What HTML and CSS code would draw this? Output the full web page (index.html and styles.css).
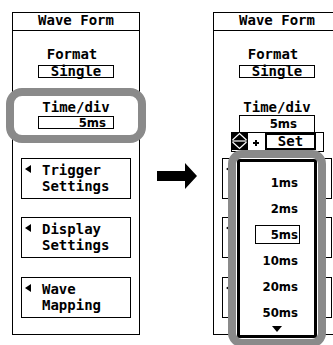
FILE: index.html
```html
<!DOCTYPE html>
<html>
<head>
<meta charset="utf-8">
<link rel="stylesheet" href="styles.css">
</head>
<body>
<div class="stage">
  <section class="panel">
    <div class="hdr">Wave Form</div>
    <div class="lbl lbl-format">Format</div>
    <div class="box">Single</div>
    <div class="lbl lbl-time">Time/div</div>
    <div class="box val val-left">5ms</div>
    <div class="btns">
      <div class="btn"><span class="tri"></span><span class="btxt">Trigger<br>Settings</span></div>
      <div class="btn"><span class="tri"></span><span class="btxt">Display<br>Settings</span></div>
      <div class="btn btn-last"><span class="tri"></span><span class="btxt">Wave<br>Mapping</span></div>
    </div>
    <div class="ring"></div>
  </section>

  <div class="arrow">
    <svg width="40" height="26" viewBox="0 0 40 26"><polygon points="0,8 28,8 28,0 40,13 28,26 28,18 0,18" fill="#000"/></svg>
  </div>

  <section class="panel">
    <div class="hdr">Wave Form</div>
    <div class="lbl lbl-format">Format</div>
    <div class="box">Single</div>
    <div class="lbl lbl-time">Time/div</div>
    <div class="tab val">5ms</div>
    <div class="ctl-row">
      <svg class="updn" width="17" height="18" viewBox="0 0 17 18">
        <rect width="17" height="18" fill="#000"/>
        <polyline points="1.5,8 8.5,1.5 15.5,8" fill="none" stroke="#fff" stroke-width="1.2"/>
        <line x1="1.5" y1="9" x2="15.5" y2="9" stroke="#fff" stroke-width="1.2"/>
        <polyline points="1.5,10 8.5,16.5 15.5,10" fill="none" stroke="#fff" stroke-width="1.2"/>
      </svg>
      <svg class="plus" width="6" height="6" viewBox="0 0 6 6"><rect x="0" y="2" width="6" height="2" fill="#000"/><rect x="2" y="0" width="2" height="6" fill="#000"/></svg>
      <div class="set">Set</div>
    </div>
    <div class="btns btns-right">
      <div class="btn"><span class="tri"></span></div>
      <div class="btn"><span class="tri"></span></div>
      <div class="btn btn-last"><span class="tri"></span></div>
    </div>
    <div class="popup">
      <div class="list">
        <div class="item val">1ms</div>
        <div class="item val">2ms</div>
        <div class="item val sel">5ms</div>
        <div class="item val">10ms</div>
        <div class="item val">20ms</div>
        <div class="item val">50ms</div>
        <span class="down"></span>
      </div>
    </div>
  </section>
</div>
</body>
</html>
```

FILE: styles.css
```css
html, body {
  margin: 0;
  padding: 0;
  background: #fff;
}
body {
  width: 333px;
  height: 345px;
  overflow: hidden;
  color: #000;
  font-family: "DejaVu Sans Mono", "Liberation Mono", monospace;
  font-weight: bold;
  font-size: 14px;
}
.stage {
  display: flex;
  align-items: flex-start;
  padding: 12px 0 0 12px;
}
.panel {
  flex: none;
  position: relative;
  box-sizing: border-box;
  width: 128px;
  height: 323px;
  border: 1px solid #000;
  display: flex;
  flex-direction: column;
}
.hdr {
  height: 17px;
  line-height: 15px;
  border-bottom: 1px solid #000;
  text-align: center;
}
.lbl {
  line-height: 14px;
  text-align: center;
}
.lbl-format {
  margin-top: 16px;
  padding-right: 8px;
}
.lbl-time {
  margin-top: 22px;
}
.box {
  box-sizing: border-box;
  width: 76px;
  height: 13px;
  margin-left: 25px;
  border: 1px solid #000;
  line-height: 11px;
  text-align: center;
  margin-top: 4px;
}
.val {
  font-family: "DejaVu Sans Condensed", "DejaVu Sans", sans-serif;
  font-stretch: condensed;
  font-weight: bold;
  font-size: 13px;
}
.val-left {
  margin-top: 2px;
  text-align: right;
  padding-right: 7px;
}
.tab {
  box-sizing: border-box;
  width: 76px;
  height: 17px;
  margin: 1px 0 0 25px;
  border: 1px solid #000;
  border-bottom: none;
  line-height: 16px;
  text-align: right;
  padding-right: 17px;
}
.ctl-row {
  box-sizing: border-box;
  width: 93px;
  height: 20px;
  margin-left: 17px;
  border: 1px solid #000;
  display: flex;
  align-items: flex-start;
}
.updn {
  display: block;
  margin: -1px 0 0 -1px;
}
.plus {
  display: block;
  margin: 7px 0 0 5px;
}
.set {
  box-sizing: border-box;
  width: 51px;
  height: 17px;
  margin-left: 6px;
  border: 2px solid #000;
  line-height: 13px;
  text-align: center;
}
.btns {
  margin: 29px 0 0 8px;
  display: flex;
  flex-direction: column;
  gap: 18px;
}
.btns-right {
  margin-top: 6px;
}
.btn {
  box-sizing: border-box;
  width: 110px;
  height: 41px;
  border: 1px solid #000;
  padding: 3px 0 0 3px;
  display: flex;
  align-items: flex-start;
}
.btn-last {
  margin-top: 1px;
}
.tri {
  flex: none;
  width: 0;
  height: 0;
  margin: 3px 11px 0 0;
  border-top: 4.5px solid transparent;
  border-bottom: 4.5px solid transparent;
  border-right: 6px solid #000;
}
.btxt {
  line-height: 16px;
}
.ring {
  position: absolute;
  left: -7px;
  top: 75px;
  box-sizing: border-box;
  width: 140px;
  height: 55px;
  border: 8px solid #8a8a8a;
  border-radius: 16px;
}
.arrow {
  flex: none;
  width: 40px;
  height: 26px;
  margin: 151px 16px 0 17px;
}
.arrow svg {
  display: block;
}
.popup {
  position: absolute;
  left: 14px;
  top: 137px;
  box-sizing: border-box;
  width: 98px;
  height: 197px;
  border: 8px solid #8a8a8a;
  border-radius: 14px;
  background: #fff;
  padding: 1px;
  display: flex;
}
.list {
  flex: 1;
  box-sizing: border-box;
  border: 3px solid #000;
  border-radius: 3px;
  background: #fff;
  padding: 11px 14px 0 0;
  display: flex;
  flex-direction: column;
  align-items: flex-end;
  gap: 7px;
}
.item {
  box-sizing: border-box;
  width: 45px;
  height: 19px;
  border: 1px solid transparent;
  line-height: 17px;
  text-align: right;
  padding-right: 1px;
}
.item.sel {
  border-color: #000;
}
.down {
  align-self: center;
  margin: -3px 0 0 14px;
  width: 0;
  height: 0;
  border-left: 5.5px solid transparent;
  border-right: 5.5px solid transparent;
  border-top: 6px solid #000;
}
```
